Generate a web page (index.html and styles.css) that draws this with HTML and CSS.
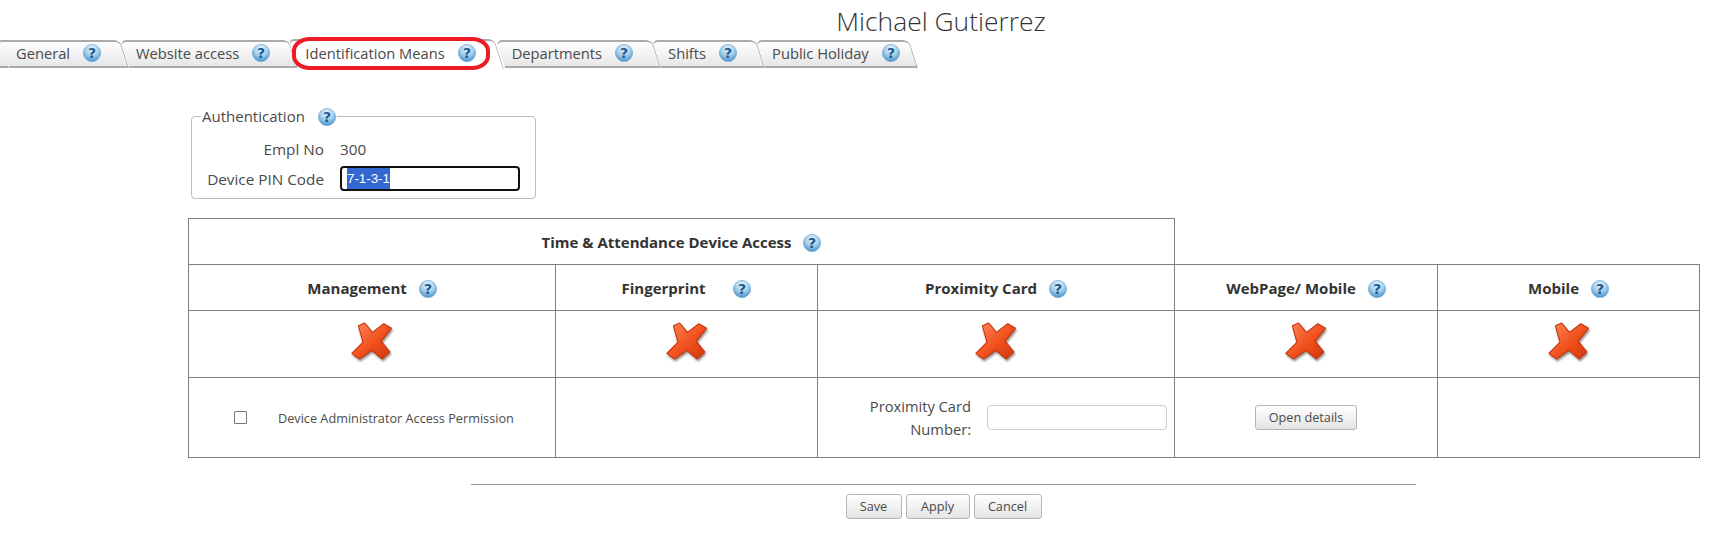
FILE: index.html
```html
<!DOCTYPE html>
<html lang="en">
<head>
  <meta charset="UTF-8">
  <title>Michael Gutierrez</title>
  <link rel="stylesheet" href="styles.css">
</head>
<body>
  <svg class="defs" width="0" height="0">
    <defs>
      <radialGradient id="helpFill" cx="50%" cy="28%" r="75%">
        <stop offset="0" stop-color="#eaf5fc"/>
        <stop offset="0.5" stop-color="#a6d0ed"/>
        <stop offset="1" stop-color="#3f8cc6"/>
      </radialGradient>
      <linearGradient id="crossFill" x1="0" y1="0" x2="1" y2="1">
        <stop offset="0" stop-color="#ff8a5c"/>
        <stop offset="0.55" stop-color="#f0501c"/>
        <stop offset="1" stop-color="#d3380b"/>
      </linearGradient>
      <symbol id="help" viewBox="0 0 18 18">
        <circle cx="9" cy="9" r="8.6" fill="url(#helpFill)" stroke="#6aa7d4" stroke-width="0.7"/>
        <text x="9" y="14" text-anchor="middle" class="help-mark">?</text>
      </symbol>
      <symbol id="cross" viewBox="36 22 120 112">
        <polygon points="57,33 75,25 97,52 130,27 152,40 122,77 147,108 125,128 95,103 60,128 38,112 70,80" fill="url(#crossFill)" stroke="#c9300b" stroke-width="3" stroke-linejoin="round"/>
      </symbol>
    </defs>
  </svg>

  <h1 class="title">Michael Gutierrez</h1>

  <div class="tabs">
    <div class="tab-stub"></div>
    <div class="tab tab-first">General <svg class="help"><use href="#help"/></svg></div>
    <div class="tab tab-sep">Website access <svg class="help"><use href="#help"/></svg></div>
    <div class="tab tab-active">Identification Means <svg class="help"><use href="#help"/></svg></div>
    <div class="tab">Departments <svg class="help"><use href="#help"/></svg></div>
    <div class="tab">Shifts <svg class="help"><use href="#help"/></svg></div>
    <div class="tab tab-sep tab-last">Public Holiday <svg class="help"><use href="#help"/></svg></div>
  </div>

  <fieldset class="auth">
    <legend>Authentication <svg class="help"><use href="#help"/></svg></legend>
    <div class="auth-grid">
      <div class="auth-label">Empl No</div>
      <div>300</div>
      <div class="auth-label">Device PIN Code</div>
      <div class="pin-input"><span class="pin-selected">7-1-3-1</span></div>
    </div>
  </fieldset>

  <table class="access">
    <colgroup>
      <col class="col-mgmt">
      <col class="col-finger">
      <col class="col-prox">
      <col class="col-web">
      <col class="col-mobile">
    </colgroup>
    <tr class="row-head">
      <th colspan="3">Time &amp; Attendance Device Access <svg class="help"><use href="#help"/></svg></th>
      <td class="blank" colspan="2"></td>
    </tr>
    <tr class="row-head">
      <th>Management <svg class="help"><use href="#help"/></svg></th>
      <th>Fingerprint <svg class="help help-far"><use href="#help"/></svg></th>
      <th>Proximity Card <svg class="help"><use href="#help"/></svg></th>
      <th>WebPage/ Mobile <svg class="help"><use href="#help"/></svg></th>
      <th>Mobile <svg class="help"><use href="#help"/></svg></th>
    </tr>
    <tr class="row-icons">
      <td><svg class="cross"><use href="#cross"/></svg></td>
      <td><svg class="cross"><use href="#cross"/></svg></td>
      <td><svg class="cross"><use href="#cross"/></svg></td>
      <td><svg class="cross"><use href="#cross"/></svg></td>
      <td><svg class="cross"><use href="#cross"/></svg></td>
    </tr>
    <tr class="row-details">
      <td>
        <div class="admin">
          <input type="checkbox">
          <span>Device Administrator Access Permission</span>
        </div>
      </td>
      <td></td>
      <td>
        <div class="prox">
          <label>Proximity Card Number:</label>
          <input type="text" class="text-input">
        </div>
      </td>
      <td><button class="btn btn-details">Open details</button></td>
      <td></td>
    </tr>
  </table>

  <div class="actions">
    <button class="btn btn-save">Save</button>
    <button class="btn btn-apply">Apply</button>
    <button class="btn btn-cancel">Cancel</button>
  </div>

  <div class="annotation"></div>
</body>
</html>
```

FILE: styles.css
```css
html, body {
  margin: 0;
  padding: 0;
}

body {
  font-family: "Open Sans", "Noto Sans", sans-serif;
  font-size: 14.7px;
  color: #4a4a4a;
  background-color: #fff;
  overflow: hidden;
}

.defs {
  position: absolute;
}

.help-mark {
  font-family: "DejaVu Sans", sans-serif;
  font-size: 14px;
  font-weight: bold;
  fill: #1a5a90;
}

.help {
  width: 18px;
  height: 18px;
  margin-left: 9px;
  flex: none;
  vertical-align: -4px;
}

.title {
  margin: 0;
  height: 39px;
  padding-left: 160px;
  font-size: 26.4px;
  font-weight: 300;
  line-height: 42px;
  text-align: center;
  color: #333;
}

/* tabs */
.tabs {
  display: flex;
  height: 29px;
}

.tab-stub {
  width: 9px;
  box-sizing: border-box;
  margin-top: 1px;
  background: linear-gradient(#fff, #e6e6e6);
  border-top: 2px solid #aaa;
  border-bottom: 2px solid #aaa;
  border-right: 1px solid #fff;
  border-top-left-radius: 4px;
}

.tab {
  position: relative;
  z-index: 1;
  display: flex;
  align-items: center;
  height: 29px;
  box-sizing: border-box;
  padding: 0 28px 2px 7px;
  white-space: nowrap;
}

.tab .help {
  margin-left: 13px;
}

.tab::before {
  content: "";
  position: absolute;
  z-index: -1;
  left: 0;
  right: 0;
  top: 1px;
  bottom: 0;
  background: linear-gradient(#fff, #e6e6e6);
  border-top: 2px solid #aaa;
  border-bottom: 2px solid #aaa;
  border-right: 1px solid #aaa;
  border-top-right-radius: 6px;
  border-top-left-radius: 6px;
  transform: skewX(18deg);
  transform-origin: bottom left;
}

.tab-first {
  padding-left: 6px;
  margin-left: 1px;
}

.tab-first::before {
  left: -1px;
  border-top-left-radius: 0;
}

.tab-sep {
  box-shadow: inset 1px -2px 0 -1px #fff;
}

.tab-last {
  padding-right: 18px;
}

.tab-active {
  z-index: 2;
  padding-right: 29px;
}

.tab-active::before {
  top: 0;
  bottom: -1px;
  background: #fff;
  border-bottom: none;
}

/* authentication box */
.auth {
  box-sizing: border-box;
  width: 345px;
  height: 93px;
  margin: 38px 0 0 191px;
  padding: 10px 0 0;
  border: 1px solid #bbb;
  border-radius: 4px;
}

.auth legend {
  margin-left: 9px;
  padding: 0 1px;
  line-height: 20px;
  font-size: 15px;
}

.auth-grid {
  display: grid;
  grid-template-columns: 132px 180px;
  grid-auto-rows: 25px;
  column-gap: 16px;
  row-gap: 5px;
  align-items: center;
  font-size: 15.3px;
}

.auth-label {
  text-align: right;
}

.pin-input {
  box-sizing: border-box;
  height: 25px;
  padding-left: 5px;
  border: 2px solid #111;
  border-radius: 4px;
  font-family: "Liberation Sans", sans-serif;
  font-size: 13.33px;
  line-height: 21px;
}

.pin-selected {
  display: inline-block;
  background-color: #3367d1;
  color: #fff;
}

/* device table */
.access {
  margin: 19px 0 0 188px;
  width: 1511px;
  table-layout: fixed;
  border-collapse: collapse;
}

.col-mgmt { width: 367px; }
.col-finger { width: 262px; }
.col-prox { width: 357px; }
.col-web { width: 263px; }
.col-mobile { width: 262px; }

.access th,
.access td {
  border: 1px solid #808080;
  padding: 0;
  text-align: center;
}

.access td.blank {
  border-top: none;
  border-right: none;
}

.access th {
  font-size: 15px;
  font-weight: 700;
  color: #333;
}

.access th .help {
  margin-left: 8px;
}

.access th .help-far {
  margin-left: 24px;
}

.row-head { height: 46px; }
.row-icons { height: 67px; }
.row-details { height: 80px; }

.cross {
  display: block;
  width: 42px;
  height: 39px;
  margin: -5px auto 0;
  filter: drop-shadow(1px 2px 1px rgba(60, 40, 30, 0.55));
}

.admin {
  display: flex;
  align-items: center;
  padding-left: 45px;
  font-size: 12.7px;
}

.admin input {
  appearance: none;
  box-sizing: border-box;
  width: 13px;
  height: 13px;
  margin: 0 31px 0 0;
  border: 1px solid #777;
  border-radius: 1px;
}

.prox {
  display: flex;
  align-items: center;
  padding-left: 39px;
}

.prox label {
  width: 114px;
  line-height: 23px;
  text-align: right;
}

.text-input {
  box-sizing: border-box;
  width: 180px;
  height: 25px;
  margin-left: 16px;
  border: 1px solid #ccc;
  border-radius: 4px;
}

/* buttons */
.btn {
  box-sizing: border-box;
  height: 25px;
  padding: 0 0 2px;
  font-family: inherit;
  font-size: 12.7px;
  color: #4a4a4a;
  background: linear-gradient(#fff, #e4e4e4);
  border: 1px solid #b5b5b5;
  border-radius: 3px;
}

.btn-details { width: 102px; }
.btn-save { width: 56px; }
.btn-apply { width: 64px; }
.btn-cancel { width: 68px; }

.actions {
  display: flex;
  justify-content: center;
  gap: 4px;
  width: 945px;
  margin: 26px 0 0 471px;
  padding-top: 9px;
  border-top: 1px solid #999;
}

/* red marker drawn over the active tab */
.annotation {
  position: absolute;
  left: 292px;
  top: 37px;
  width: 198px;
  height: 33px;
  box-sizing: border-box;
  border: 4px solid #ed1c24;
  border-radius: 18px / 14px;
  z-index: 5;
}
```
